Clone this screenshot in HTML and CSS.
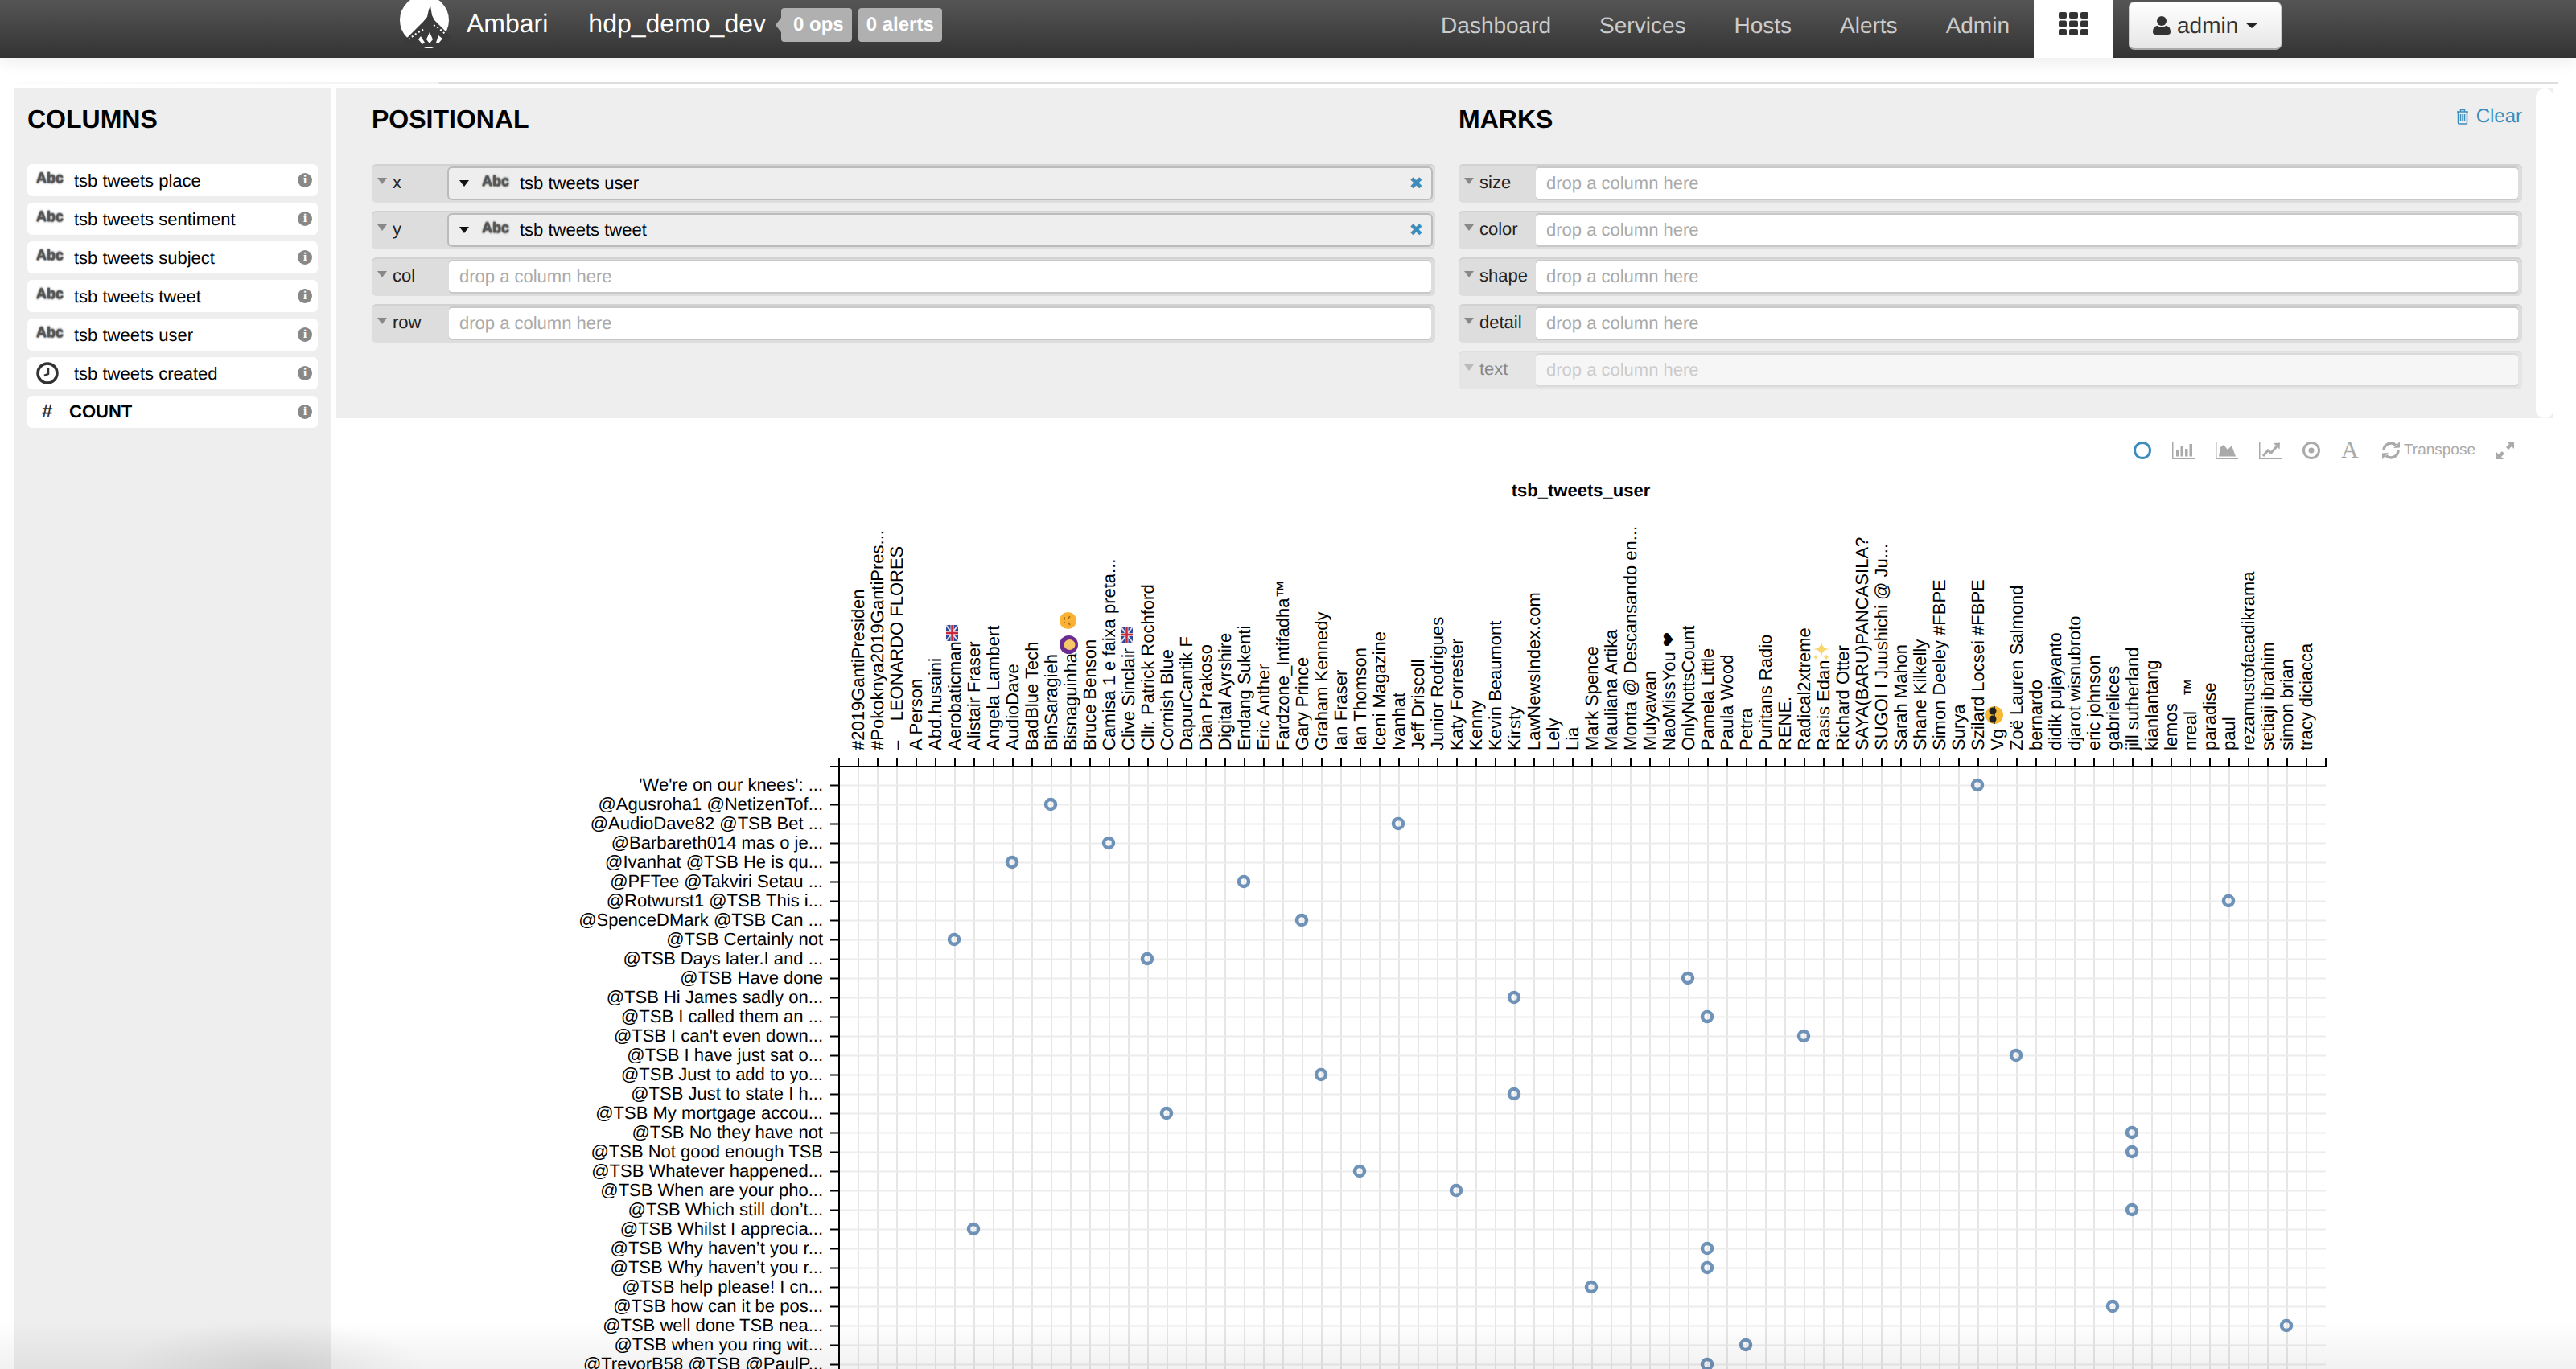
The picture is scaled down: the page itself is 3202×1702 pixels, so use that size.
FILE: index.html
```html
<!DOCTYPE html>
<html lang="en">
<head>
    <meta charset="UTF-8">
    <title>Ambari - hdp_demo_dev</title>
    <link rel="stylesheet" href="styles.css">
    <script src="chart.js"></script>
</head>
<body>
    <header class="top_bar">
        <svg class="logo" viewBox="0 0 66 62">
            <circle cx="32.5" cy="25" r="30.5" fill="#fff"/>
            <path d="M40 7l2 12 3 6 20 20-4 8-20 10H24L10 58 6 50 12 46 31 27 36 21 38 12z" fill="#3a3a3a"/>
            <path d="M13 49l5-4 4-3 5-3 5-3M44 31l5 3 5 4 4 4" stroke="#fff" stroke-width="2" stroke-dasharray="2 3" fill="none"/>
            <path d="M39 40l4 9-4 5-4-5zM28 45l5 8-3 2-5-6zM50 44l-3 9 3 1 5-6zM30 58h16l-4 2H34z" fill="#fff"/>
        </svg>
        <span class="brand">Ambari</span>
        <span class="cluster">hdp_demo_dev</span>
        <span class="badge badge_first">0 ops</span>
        <span class="badge">0 alerts</span>
        <nav class="nav">
            <a class="nav_link" href="javascript:;">Dashboard</a>
            <a class="nav_link" href="javascript:;">Services</a>
            <a class="nav_link" href="javascript:;">Hosts</a>
            <a class="nav_link" href="javascript:;">Alerts</a>
            <a class="nav_link" href="javascript:;">Admin</a>
        </nav>
        <a class="apps_tab" href="javascript:;">
            <svg class="apps_icon" viewBox="0 0 37 29" fill="#333">
                <rect x="0" y="0" width="10" height="8" rx="2"/><rect x="13" y="0" width="11" height="8" rx="2"/><rect x="27" y="0" width="10" height="8" rx="2"/>
                <rect x="0" y="10.5" width="10" height="8" rx="2"/><rect x="13" y="10.5" width="11" height="8" rx="2"/><rect x="27" y="10.5" width="10" height="8" rx="2"/>
                <rect x="0" y="21" width="10" height="8" rx="2"/><rect x="13" y="21" width="11" height="8" rx="2"/><rect x="27" y="21" width="10" height="8" rx="2"/>
            </svg>
        </a>
        <a class="user_btn" href="javascript:;">
            <svg class="user_icon" viewBox="0 0 22 23" fill="#333">
                <ellipse cx="11" cy="6" rx="6" ry="6"/>
                <path d="M0 20c0-6 3-8 6-8 1.500 1 3 1.500 5 1.500s3.500-.5 5-1.500c3 0 6 2 6 8 0 2-1.500 3-3.500 3h-15C1.500 23 0 22 0 20z"/>
            </svg>
            <span>admin</span>
            <i class="user_caret"></i>
        </a>
    </header>

    <div class="top_rule"></div>

    <div class="page">
        <aside class="columns_panel">
            <h2 class="panel_title">COLUMNS</h2>
            <ul class="column_list">
                <li class="column_item"><span class="abc">Abc</span><span class="column_name">tsb tweets place</span><i class="info">i</i></li>
                <li class="column_item"><span class="abc">Abc</span><span class="column_name">tsb tweets sentiment</span><i class="info">i</i></li>
                <li class="column_item"><span class="abc">Abc</span><span class="column_name">tsb tweets subject</span><i class="info">i</i></li>
                <li class="column_item"><span class="abc">Abc</span><span class="column_name">tsb tweets tweet</span><i class="info">i</i></li>
                <li class="column_item"><span class="abc">Abc</span><span class="column_name">tsb tweets user</span><i class="info">i</i></li>
                <li class="column_item">
                    <svg class="clock" viewBox="0 0 28 28" fill="none" stroke="#333">
                        <circle cx="14" cy="14" r="12" stroke-width="3.500"/>
                        <path d="M15 7v8l-5 2" stroke-width="2.500"/>
                    </svg>
                    <span class="column_name">tsb tweets created</span><i class="info">i</i>
                </li>
                <li class="column_item"><span class="hash">#</span><span class="column_count">COUNT</span><i class="info">i</i></li>
            </ul>
        </aside>

        <main class="content">
            <section class="shelves">
                <div class="shelf_col">
                    <h2 class="panel_title">POSITIONAL</h2>
                    <div class="shelf">
                        <label class="shelf_label"><i class="tri"></i>x</label>
                        <div class="shelf_drop shelf_full">
                            <i class="field_caret"></i><span class="abc abc_field">Abc</span><span class="field_name">tsb tweets user</span><span class="field_x">&#10006;</span>
                        </div>
                    </div>
                    <div class="shelf">
                        <label class="shelf_label"><i class="tri"></i>y</label>
                        <div class="shelf_drop shelf_full">
                            <i class="field_caret"></i><span class="abc abc_field">Abc</span><span class="field_name">tsb tweets tweet</span><span class="field_x">&#10006;</span>
                        </div>
                    </div>
                    <div class="shelf">
                        <label class="shelf_label"><i class="tri"></i>col</label>
                        <div class="shelf_drop">drop a column here</div>
                    </div>
                    <div class="shelf">
                        <label class="shelf_label"><i class="tri"></i>row</label>
                        <div class="shelf_drop">drop a column here</div>
                    </div>
                </div>
                <div class="shelf_col">
                    <div class="marks_head">
                        <h2 class="panel_title">MARKS</h2>
                        <a class="clear_link" href="javascript:;">
                            <svg class="trash" viewBox="0 0 16 20" fill="none" stroke="#3c8dbc" stroke-width="1.500">
                                <path d="M1 4h14M5.500 4V1.500h5V4M2.500 4v14a1 1 0 0 0 1 1h9a1 1 0 0 0 1-1V4M5.500 7v9M8 7v9M10.500 7v9"/>
                            </svg>
                            Clear
                        </a>
                    </div>
                    <div class="shelf">
                        <label class="shelf_label"><i class="tri"></i>size</label>
                        <div class="shelf_drop">drop a column here</div>
                    </div>
                    <div class="shelf">
                        <label class="shelf_label"><i class="tri"></i>color</label>
                        <div class="shelf_drop">drop a column here</div>
                    </div>
                    <div class="shelf">
                        <label class="shelf_label"><i class="tri"></i>shape</label>
                        <div class="shelf_drop">drop a column here</div>
                    </div>
                    <div class="shelf">
                        <label class="shelf_label"><i class="tri"></i>detail</label>
                        <div class="shelf_drop">drop a column here</div>
                    </div>
                    <div class="shelf shelf_off">
                        <label class="shelf_label"><i class="tri"></i>text</label>
                        <div class="shelf_drop">drop a column here</div>
                    </div>
                </div>
                <div class="shelves_end"></div>
            </section>

            <div class="tool_row">
                <svg class="tool tool_round" viewBox="0 0 22 22" fill="none" stroke="#3c8dbc" stroke-width="3"><circle cx="11" cy="11" r="9.500"/></svg>
                <svg class="tool" viewBox="0 0 28 22" fill="#aaa">
                    <path d="M0 0h1.500v20.500H28V22H0z"/>
                    <rect x="5" y="11" width="3.500" height="7.500"/><rect x="10.500" y="6" width="3.500" height="12.500"/><rect x="16" y="9" width="3.500" height="9.500"/><rect x="21.500" y="3" width="3.500" height="15.500"/>
                </svg>
                <svg class="tool" viewBox="0 0 28 22" fill="#aaa">
                    <path d="M0 0h1.500v20.500H28V22H0z"/>
                    <path d="M4 18.500L6 7l4-3 5 6 5-5 5 13.500z"/>
                </svg>
                <svg class="tool" viewBox="0 0 28 22" fill="#aaa">
                    <path d="M0 0h1.500v20.500H28V22H0z"/>
                    <path d="M5 18l6-7 4 3 7-8" fill="none" stroke="#aaa" stroke-width="3"/>
                    <path d="M18 2l8-.5-.5 8z"/>
                </svg>
                <svg class="tool tool_round" viewBox="0 0 22 22" fill="none" stroke="#aaa" stroke-width="3"><circle cx="11" cy="11" r="9.500"/><circle cx="11" cy="11" r="3.500" fill="#aaa" stroke="none"/></svg>
                <span class="tool_letter">A</span>
                <span class="tool_swap">
                    <svg class="tool" viewBox="0 0 28 22" fill="none" stroke="#aaa" stroke-width="3.500">
                        <path d="M5 11a9 9 0 0 1 15-6.500M23 11a9 9 0 0 1-15 6.500"/>
                        <path d="M17 8l8-.5V0zM11 14l-8 .5V22z" fill="#aaa" stroke="none"/>
                    </svg>
                    Transpose
                </span>
                <svg class="tool tool_round" viewBox="0 0 22 22" fill="#aaa">
                    <path d="M13 0h9v9l-3-3-4 4-3-3 4-4zM9 22H0v-9l3 3 4-4 3 3-4 4z"/>
                </svg>
            </div>

            <svg id="chart" class="chart" viewBox="418 580 2762 1122"></svg>
        </main>
    </div>

    <div class="screen_fade"></div>
</body>
</html>
```

FILE: styles.css
```css
*{
    margin: 0;
    padding: 0;
    box-sizing: border-box;
    list-style-type: none;
}
html,body{
    height: 100%;
    overflow: hidden;
}
body{
    background: #fff;
    color: #000;
    font-family: "Liberation Sans", Arial, sans-serif;
    font-size: 22px;
    text-rendering: geometricPrecision;
}
a{
    text-decoration: none;
}
.top_bar{
    display: flex;
    align-items: center;
    height: 72px;
    padding: 0 366px 0 495px;
    background: linear-gradient(#555, #333);
    box-shadow: 0 6px 18px rgba(0,0,0,.07);
}
.logo{
    width: 66px;
    height: 62px;
    align-self: flex-start;
    flex: none;
}
.brand{
    margin-left: 19px;
    padding-bottom: 13px;
    font-size: 32px;
    color: #fff;
}
.cluster{
    margin-left: 50px;
    padding-bottom: 13px;
    font-size: 32px;
    color: #fff;
}
.badge{
    position: relative;
    display: block;
    height: 42px;
    margin: 0 0 10px 8px;
    padding: 0 10px;
    border-radius: 4px;
    background: #b0b0b0;
    color: #fff;
    font-size: 24px;
    font-weight: bold;
    line-height: 42px;
}
.badge_first{
    margin-left: 19px;
    padding-left: 15px;
}
.badge_first:before{
    content: "";
    position: absolute;
    left: -7px;
    top: 12px;
    border-style: solid;
    border-width: 9px 7px 9px 0;
    border-color: transparent #b0b0b0 transparent transparent;
}
.nav{
    display: flex;
    margin-left: auto;
}
.nav_link{
    padding: 0 30px 8px;
    color: #ccc;
    font-size: 28px;
}
.apps_tab{
    display: flex;
    justify-content: center;
    width: 98px;
    height: 72px;
    padding-top: 15px;
    background: #fff;
}
.apps_icon{
    width: 37px;
    height: 29px;
}
.user_btn{
    display: flex;
    align-items: center;
    align-self: flex-start;
    width: 190px;
    height: 60px;
    margin: 2px 0 0 20px;
    padding-left: 29px;
    border: 1px solid #ccc;
    border-bottom: 2px solid #aaa;
    border-radius: 7px;
    background: linear-gradient(#fff, #e6e6e6);
    color: #333;
    font-size: 28px;
}
.user_icon{
    width: 22px;
    height: 23px;
    margin-right: 8px;
}
.user_caret{
    margin-left: 9px;
    border-style: solid;
    border-width: 7px 8px 0 8px;
    border-color: #222 transparent transparent transparent;
}
.top_rule{
    width: 3162px;
    height: 3px;
    margin: 30px 0 5px 18px;
    background: linear-gradient(90deg, #fdfdfd 0, #f6f6f6 284px, #f3f3f3 527px, #ddd 528px, #ddd 100%);
}
.page{
    display: flex;
    height: 1592px;
    padding: 0 22px 0 18px;
}
.columns_panel{
    width: 394px;
    flex: none;
    padding: 20px 17px 0 16px;
    background: #eee;
}
.panel_title{
    height: 36px;
    margin-bottom: 38px;
    font-size: 32px;
    font-weight: bold;
    line-height: 36px;
}
.column_item{
    display: flex;
    align-items: center;
    height: 40px;
    margin-bottom: 8px;
    padding: 0 7px 0 11px;
    border-radius: 6px;
    background: #fff;
}
.abc{
    position: relative;
    top: -3px;
    width: 47px;
    flex: none;
    color: #555;
    font-size: 18px;
    font-weight: bold;
    text-shadow: 0 1px 2px #555, 0 -1px 2px #777;
}
.clock{
    width: 28px;
    height: 28px;
    margin-right: 19px;
    flex: none;
}
.column_name{
    flex: 1;
    padding-top: 1px;
}
.hash{
    width: 41px;
    padding-left: 7px;
    flex: none;
    font-size: 24px;
    font-weight: bold;
    color: #333;
}
.column_count{
    flex: 1;
    font-weight: bold;
}
.info{
    width: 18px;
    height: 18px;
    flex: none;
    border-radius: 50%;
    background: #888;
    color: #fff;
    font: bold 15px/18px "Liberation Serif", serif;
    text-align: center;
}
.content{
    flex: 1;
    margin-left: 6px;
    min-width: 0;
}
.shelves{
    position: relative;
    display: flex;
    height: 410px;
    margin-right: 6px;
    padding: 20px 0 0 44px;
    background: #eee;
}
.shelf_col{
    width: 1322px;
    flex: none;
}
.shelf_col + .shelf_col{
    margin-left: 29px;
}
.shelves_end{
    position: absolute;
    right: 0;
    top: 0;
    bottom: 0;
    width: 22px;
    border-radius: 11px;
    background: #fff;
}
.marks_head{
    display: flex;
    justify-content: space-between;
    align-items: flex-start;
}
.clear_link{
    display: flex;
    align-items: center;
    gap: 9px;
    margin-top: 1px;
    color: #3c8dbc;
    font-size: 24px;
}
.trash{
    width: 16px;
    height: 20px;
}
.shelf{
    display: flex;
    height: 48px;
    margin-bottom: 10px;
    padding: 5px 5px 5px 0;
    border-radius: 6px;
    background: #ddd;
    box-shadow: inset 0 2px 0 #d2d2d2;
}
.shelf_label{
    display: flex;
    align-items: center;
    width: 96px;
    flex: none;
    padding: 0 0 3px 7px;
    color: #222;
}
.tri{
    margin: -4px 7px 0 0;
    border-style: solid;
    border-width: 8px 6px 0 6px;
    border-color: #888 transparent transparent transparent;
}
.shelf_drop{
    display: flex;
    align-items: center;
    flex: 1;
    padding-left: 13px;
    border-radius: 4px;
    background: #fff;
    box-shadow: 0 -2px 0 #c8c8c8, 0 2px 0 #c8c8c8;
    color: #aaa;
}
.shelf_full{
    background: #eee;
    box-shadow: 0 0 0 2px #bbb;
    color: #000;
}
.shelf_off{
    opacity: .5;
}
.field_caret{
    margin-right: 16px;
    border-style: solid;
    border-width: 8px 6px 0 6px;
    border-color: #111 transparent transparent transparent;
}
.abc_field{
    width: 47px;
}
.field_name{
    flex: 1;
}
.field_x{
    margin-right: 10px;
    color: #3c8dbc;
    font: 21px "DejaVu Sans", sans-serif;
}
.tool_row{
    display: flex;
    justify-content: flex-end;
    align-items: center;
    gap: 26px;
    height: 22px;
    margin: 29px 55px 9px 0;
}
.tool{
    width: 28px;
    height: 22px;
    flex: none;
}
.tool_round{
    width: 22px;
}
.tool_letter{
    width: 22px;
    color: #aaa;
    font: 30px/22px "Liberation Serif", serif;
    text-align: center;
}
.tool_swap{
    display: flex;
    align-items: center;
    gap: 2px;
    color: #aaa;
    font-size: 19px;
}
.chart{
    display: block;
    width: 2762px;
    height: 1122px;
}
.chart text{
    fill: #000;
    font-family: "Liberation Sans", Arial, "DejaVu Sans", sans-serif;
    font-size: 22px;
}
.chart .chart_title{
    font-weight: bold;
    text-anchor: middle;
}
.chart .row_text{
    text-anchor: end;
}
.screen_fade{
    position: absolute;
    left: 0;
    right: 0;
    bottom: 0;
    height: 120px;
    pointer-events: none;
    background:
        radial-gradient(ellipse 190px 60px at 340px 100%, rgba(0,0,0,.08), transparent),
        linear-gradient(transparent 60px, rgba(0,0,0,.055));
}
```

FILE: chart.js
```js
window.onload=function(){
    var oChart=document.getElementById('chart');

    var aUsers=['#2019GantiPresiden','#Pokoknya2019GantiPres...','\u2013\u00a0\u00a0\u00a0\u00a0LEONARDO FLORES','A Person','Abd.husaini','Aerobaticman','Alistair Fraser','Angela Lambert','AudioDave','BadBlue Tech','BinSaragieh','Bisnaguinha','Bruce Benson','Camisa 1 e faixa preta...','Clive Sinclair','Cllr. Patrick Rochford','Cornish Blue','DapurCantik F','Dian Prakoso','Digital Ayrshire','Endang Sukenti','Eric Anther','Fardzone_Intifadha\u2122','Gary Prince','Graham Kennedy','Ian Fraser','Ian Thomson','Iceni Magazine','Ivanhat','Jeff Driscoll','Junior Rodrigues','Katy Forrester','Kenny','Kevin Beaumont','Kirsty','LawNewsIndex.com','Lely','Lia','Mark Spence','Mauliana Artika','Monta @ Descansando en...','Mulyawan','NaoMissYou \u2764','OnlyNottsCount','Pamela Little','Paula Wood','Petra','Puritans Radio','RENE.','Radical2xtreme','Rasis Edan','Richard Otter','SAYA(BARU)PANCASILA?','SUGOI I Juushichi @ Ju...','Sarah Mahon','Shane Kilkelly','Simon Deeley #FBPE','Surya','Szilard Locsei #FBPE','Vg','Zo\u00eb Lauren Salmond','bernardo','didik pujayanto','djarot wisnubroto','eric johnson','gabrielices','jill sutherland','kianlantang','lemos','nreal\u00a0\u00a0\u00a0\u2122','paradise','paul','rezamustofacadikrama','setiaji ibrahim','simon brian','tracy diciacca'];

    var aTweets=["'We're on our knees': ...",'@Agusroha1 @NetizenTof...','@AudioDave82 @TSB Bet ...','@Barbareth014 mas o je...','@Ivanhat @TSB He is qu...','@PFTee @Takviri Setau ...','@Rotwurst1 @TSB This i...','@SpenceDMark @TSB Can ...','@TSB Certainly not','@TSB Days later.I and ...','@TSB Have done','@TSB Hi James sadly on...','@TSB I called them an ...',"@TSB I can't even down...",'@TSB I have just sat o...','@TSB Just to add to yo...','@TSB Just to state I h...','@TSB My mortgage accou...','@TSB No they have not','@TSB Not good enough TSB','@TSB Whatever happened...','@TSB When are your pho...','@TSB Which still don\u2019t...','@TSB Whilst I apprecia...','@TSB Why haven\u2019t you r...','@TSB Why haven\u2019t you r...','@TSB help please! I cn...','@TSB how can it be pos...','@TSB well done TSB nea...','@TSB when you ring wit...','@TrevorB58 @TSB @PaulP...'];

    //column of the point in each row, row 1 first
    var aPoints=[59,11,29,14,9,21,72,24,6,16,44,35,45,50,61,25,35,17,67,67,27,32,67,7,45,45,39,66,75,47,45];

    var iLeft=1043;
    var iTop=953;
    var iRight=2891;
    var iBottom=1702;
    var iCol=24;
    var iRow=24;
    var iFirstRow=976.5;
    var str='';
    var i=0;

    function line(x1,y1,x2,y2,color){
        return '<line x1="'+x1+'" y1="'+y1+'" x2="'+x2+'" y2="'+y2+'" stroke="'+color+'" stroke-width="2"/>';
    }
    function flag(x,y){
        return '<rect x="'+x+'" y="'+y+'" width="15" height="20" fill="#2b4a9b"/>'
              +'<path d="M'+x+' '+y+'l15 20M'+(x+15)+' '+y+'l-15 20" stroke="#e8dfe6" stroke-width="2"/>'
              +'<path d="M'+(x+7.5)+' '+y+'v20M'+x+' '+(y+10)+'h15" stroke="#e8dfe6" stroke-width="4"/>'
              +'<path d="M'+(x+7.5)+' '+y+'v20M'+x+' '+(y+10)+'h15" stroke="#c8283a" stroke-width="2.500"/>';
    }
    function spark(x,y,r){
        return '<path d="M'+x+' '+(y-r)+'Q'+x+' '+y+' '+(x+r)+' '+y+'Q'+x+' '+y+' '+x+' '+(y+r)+'Q'+x+' '+y+' '+(x-r)+' '+y+'Q'+x+' '+y+' '+x+' '+(y-r)+'z" fill="#f8d66d"/>';
    }

    str+='<text class="chart_title" x="1965" y="617">tsb_tweets_user</text>';

    //grid
    for(i=1;i<aUsers.length+1;i++){
        str+=line(iLeft+i*iCol,iTop,iLeft+i*iCol,iBottom,'#e6e6e6');
    }
    for(i=0;i<aTweets.length;i++){
        str+=line(iLeft,iFirstRow+i*iRow,iRight,iFirstRow+i*iRow,'#ececec');
    }

    //axes
    for(i=0;i<aUsers.length+2;i++){
        str+=line(iLeft+i*iCol,942,iLeft+i*iCol,iTop,'#000');
    }
    for(i=0;i<aTweets.length;i++){
        str+=line(1032,iFirstRow+i*iRow,iLeft,iFirstRow+i*iRow,'#000');
    }
    str+=line(1032,iTop,iRight,iTop,'#000');
    str+=line(iLeft,iTop,iLeft,iBottom,'#000');

    //labels
    for(i=0;i<aUsers.length;i++){
        var x=iLeft+(i+1)*iCol+7;
        str+='<text transform="translate('+x+',933) rotate(-90)">'+aUsers[i]+'</text>';
    }
    for(i=0;i<aTweets.length;i++){
        str+='<text class="row_text" x="1023" y="'+(iFirstRow+i*iRow+6)+'">'+aTweets[i]+'</text>';
    }

    //emoji in the user names
    str+=flag(1176,777);
    str+=flag(1393,779);
    str+='<circle cx="1328.500" cy="801.500" r="11.500" fill="#6a2c91"/><ellipse cx="1329.500" cy="801.500" rx="7" ry="6.500" fill="#f6c667"/>';
    str+='<circle cx="1327.500" cy="771.500" r="10.500" fill="#f9b233"/><path d="M1323 767v4M1323 775v-2M1330 766l-2 3M1330 777l-2-3" stroke="#a8641a" stroke-width="1.500"/>';
    str+=spark(2264,807,11)+spark(2257,817,4)+spark(2270,817,5);
    str+='<circle cx="2479" cy="889" r="11" fill="#f7b733"/><ellipse cx="2477" cy="884" rx="4.500" ry="4.500" fill="#222"/><ellipse cx="2477" cy="894" rx="4.500" ry="4.500" fill="#222"/><path d="M2479 878v22" stroke="#222" stroke-width="1.500"/>';

    //points
    for(i=0;i<aPoints.length;i++){
        str+='<circle cx="'+(iLeft+aPoints[i]*iCol-1)+'" cy="'+(iFirstRow+i*iRow-0.5)+'" r="6" fill="none" stroke="#4c78a8" stroke-opacity="0.8" stroke-width="4.500"/>';
    }

    oChart.innerHTML=str;
};
```
